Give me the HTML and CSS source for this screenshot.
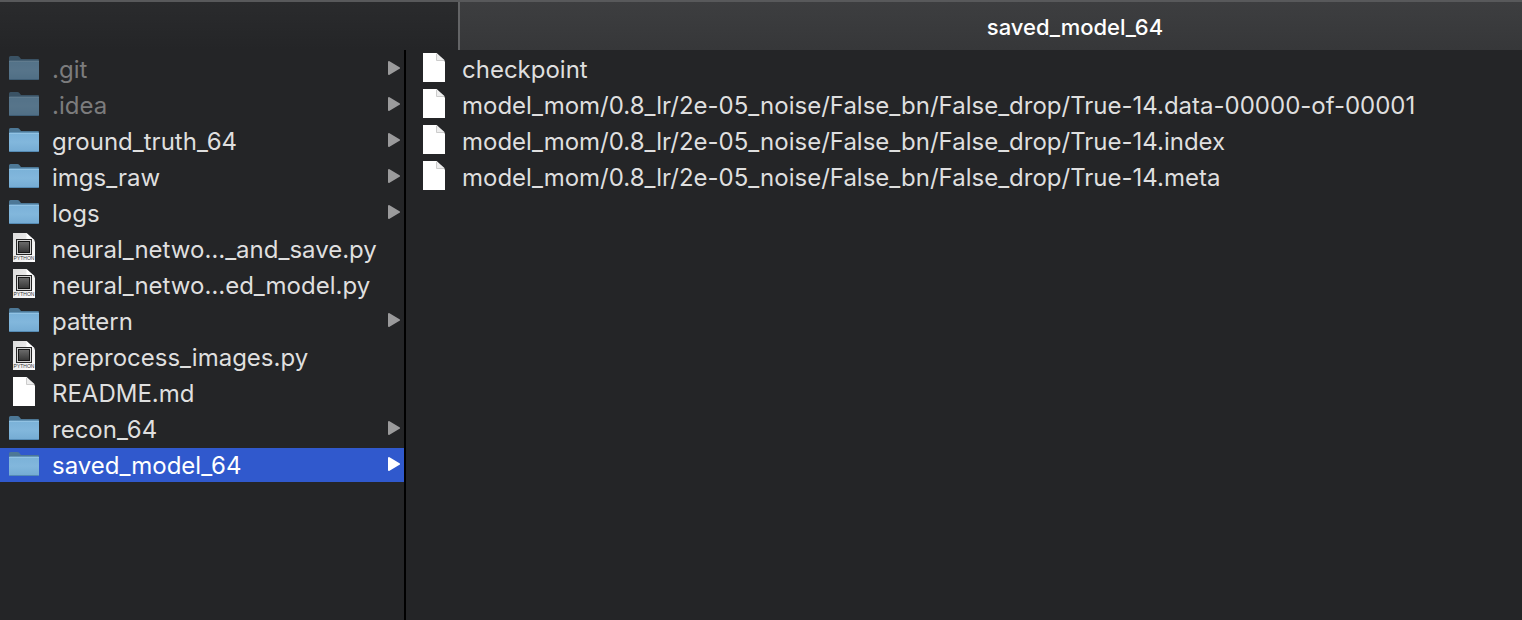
FILE: index.html
```html
<!DOCTYPE html>
<html lang="en">
<head>
<meta charset="utf-8">
<title>saved_model_64</title>
<link rel="stylesheet" href="styles.css">
</head>
<body>
<svg class="defs" width="0" height="0" aria-hidden="true">
  <defs>
    <linearGradient id="folder-fill" x1="0" y1="0" x2="0" y2="1">
      <stop offset="0" stop-color="#7ab1d8"/>
      <stop offset="0.5" stop-color="#82b7dc"/>
      <stop offset="1" stop-color="#74abd3"/>
    </linearGradient>
    <linearGradient id="page-fill" x1="0" y1="0" x2="1" y2="1">
      <stop offset="0" stop-color="#dcdcdc"/>
      <stop offset="1" stop-color="#fff"/>
    </linearGradient>
    <linearGradient id="chip-fill" x1="0" y1="0" x2="0" y2="1">
      <stop offset="0" stop-color="#6c6c6c"/>
      <stop offset="1" stop-color="#363636"/>
    </linearGradient>
    <symbol id="folder" viewBox="0 0 32 32">
      <path d="M1 9V5.500Q1 4 2.500 4H9.500Q10.500 4 11.200 4.800L13 7H30Q31 7 31 8V10H1Z" fill="#4d7896"/>
      <path d="M1 9.500Q1 8.500 2 8.500H30Q31 8.500 31 9.500V26.500Q31 28 29.500 28H2.500Q1 28 1 26.500Z" fill="url(#folder-fill)"/>
      <path d="M1 9.500H31" stroke="#91c2e3" stroke-width="1"/>
      <path d="M1.500 27.500H30.500" stroke="#558bb4" stroke-width="1"/>
    </symbol>
    <symbol id="page" viewBox="0 0 32 32">
      <path d="M5 1H18.500L27 9.500V30H5Z" fill="#fff"/>
      <path d="M18.500 1V8.500H27Z" fill="#eee"/>
      <path d="M18.500 2V8.500H26" fill="none" stroke="#ccc" stroke-width="1"/>
    </symbol>
    <symbol id="python" viewBox="0 0 32 32">
      <path d="M5 1H18.500L27 9.500V30H5Z" fill="url(#page-fill)"/>
      <path d="M18.500 1V8.500H27Z" fill="#fff"/>
      <rect x="8.500" y="7.500" width="15" height="15" fill="#d0d0d0" stroke="#262626" stroke-width="1"/>
      <rect x="10.500" y="9.500" width="11" height="11" fill="url(#chip-fill)" stroke="#161616" stroke-width="1"/>
      <text class="badge" x="16" y="28" text-anchor="middle">PYTHON</text>
    </symbol>
    <symbol id="arrow" viewBox="0 0 12 14">
      <path d="M1 1L11 7L1 13Z" fill="currentColor" stroke="currentColor" stroke-width="2" stroke-linejoin="round"/>
    </symbol>
  </defs>
</svg>
<div class="window">
  <header class="header">
    <div class="header-side"></div>
    <h1 class="header-title">saved_model_64</h1>
  </header>
  <main class="columns">
    <nav class="column column-parent" aria-label="Project">
      <a class="row hidden-item" href="#git"><svg class="icon"><use href="#folder"/></svg><span class="name">.git</span><svg class="arrow"><use href="#arrow"/></svg></a>
      <a class="row hidden-item" href="#idea"><svg class="icon"><use href="#folder"/></svg><span class="name">.idea</span><svg class="arrow"><use href="#arrow"/></svg></a>
      <a class="row" href="#ground"><svg class="icon"><use href="#folder"/></svg><span class="name">ground_truth_64</span><svg class="arrow"><use href="#arrow"/></svg></a>
      <a class="row" href="#imgs"><svg class="icon"><use href="#folder"/></svg><span class="name">imgs_raw</span><svg class="arrow"><use href="#arrow"/></svg></a>
      <a class="row" href="#logs"><svg class="icon"><use href="#folder"/></svg><span class="name">logs</span><svg class="arrow"><use href="#arrow"/></svg></a>
      <a class="row" href="#save"><svg class="icon"><use href="#python"/></svg><span class="name">neural_netwo…_and_save.py</span></a>
      <a class="row" href="#model"><svg class="icon"><use href="#python"/></svg><span class="name">neural_netwo…ed_model.py</span></a>
      <a class="row" href="#pattern"><svg class="icon"><use href="#folder"/></svg><span class="name">pattern</span><svg class="arrow"><use href="#arrow"/></svg></a>
      <a class="row" href="#preprocess"><svg class="icon"><use href="#python"/></svg><span class="name">preprocess_images.py</span></a>
      <a class="row" href="#readme"><svg class="icon"><use href="#page"/></svg><span class="name">README.md</span></a>
      <a class="row" href="#recon"><svg class="icon"><use href="#folder"/></svg><span class="name">recon_64</span><svg class="arrow"><use href="#arrow"/></svg></a>
      <a class="row selected" href="#saved" aria-current="true"><svg class="icon"><use href="#folder"/></svg><span class="name">saved_model_64</span><svg class="arrow"><use href="#arrow"/></svg></a>
    </nav>
    <nav class="column column-files" aria-label="saved_model_64">
      <a class="row" href="#checkpoint"><svg class="icon"><use href="#page"/></svg><span class="name">checkpoint</span></a>
      <a class="row" href="#data"><svg class="icon"><use href="#page"/></svg><span class="name">model_mom/0.8_lr/2e-05_noise/False_bn/False_drop/True-14.data-00000-of-00001</span></a>
      <a class="row" href="#index"><svg class="icon"><use href="#page"/></svg><span class="name">model_mom/0.8_lr/2e-05_noise/False_bn/False_drop/True-14.index</span></a>
      <a class="row" href="#meta"><svg class="icon"><use href="#page"/></svg><span class="name">model_mom/0.8_lr/2e-05_noise/False_bn/False_drop/True-14.meta</span></a>
    </nav>
  </main>
</div>
</body>
</html>
```
FILE: styles.css
```css
* {
  box-sizing: border-box;
}

body {
  margin: 0;
  background: #242527;
  color: #dfdfdf;
  font-family: Inter, "Liberation Sans", sans-serif;
  font-size: 24px;
}

.defs {
  position: absolute;
}

.window {
  display: flex;
  flex-direction: column;
  min-height: 100vh;
}

.header {
  display: flex;
  height: 50px;
  border-top: 2px solid #58595b;
}

.header-side {
  flex: 0 0 460px;
  background: linear-gradient(#2a2b2d, #242527);
  border-right: 2px solid #636466;
}

.header-title {
  flex: 1;
  margin: 0;
  padding-left: 168px;
  background: linear-gradient(#3d3e40, #363739);
  color: #fff;
  font-size: 22px;
  font-weight: 500;
  line-height: 50px;
  text-align: center;
}

.columns {
  display: flex;
  flex: 1;
}

.column {
  display: flex;
  flex-direction: column;
  gap: 2px;
  padding-top: 2px;
}

.column-parent {
  flex: 0 0 406px;
  border-right: 2px solid #000;
}

.column-files {
  flex: 1;
  min-width: 0;
}

.row {
  display: flex;
  gap: 12px;
  height: 34px;
  padding: 0 4px 0 8px;
  color: inherit;
  line-height: 36px;
  text-decoration: none;
  white-space: nowrap;
}

.column-files .row {
  padding-left: 12px;
}

.name {
  flex: 1;
}

.icon {
  flex: none;
  width: 32px;
  height: 32px;
}

.arrow {
  flex: none;
  width: 12px;
  height: 14px;
  margin-top: 9px;
  color: #9b9b9c;
}

.hidden-item .name {
  color: #7c7c7d;
}

.hidden-item .icon {
  opacity: 0.55;
}

.selected {
  background: #3059cd;
  color: #fff;
}

.selected .arrow {
  color: #fff;
}

.badge {
  fill: #333;
  font: 400 5px "Liberation Sans", sans-serif;
}
```
